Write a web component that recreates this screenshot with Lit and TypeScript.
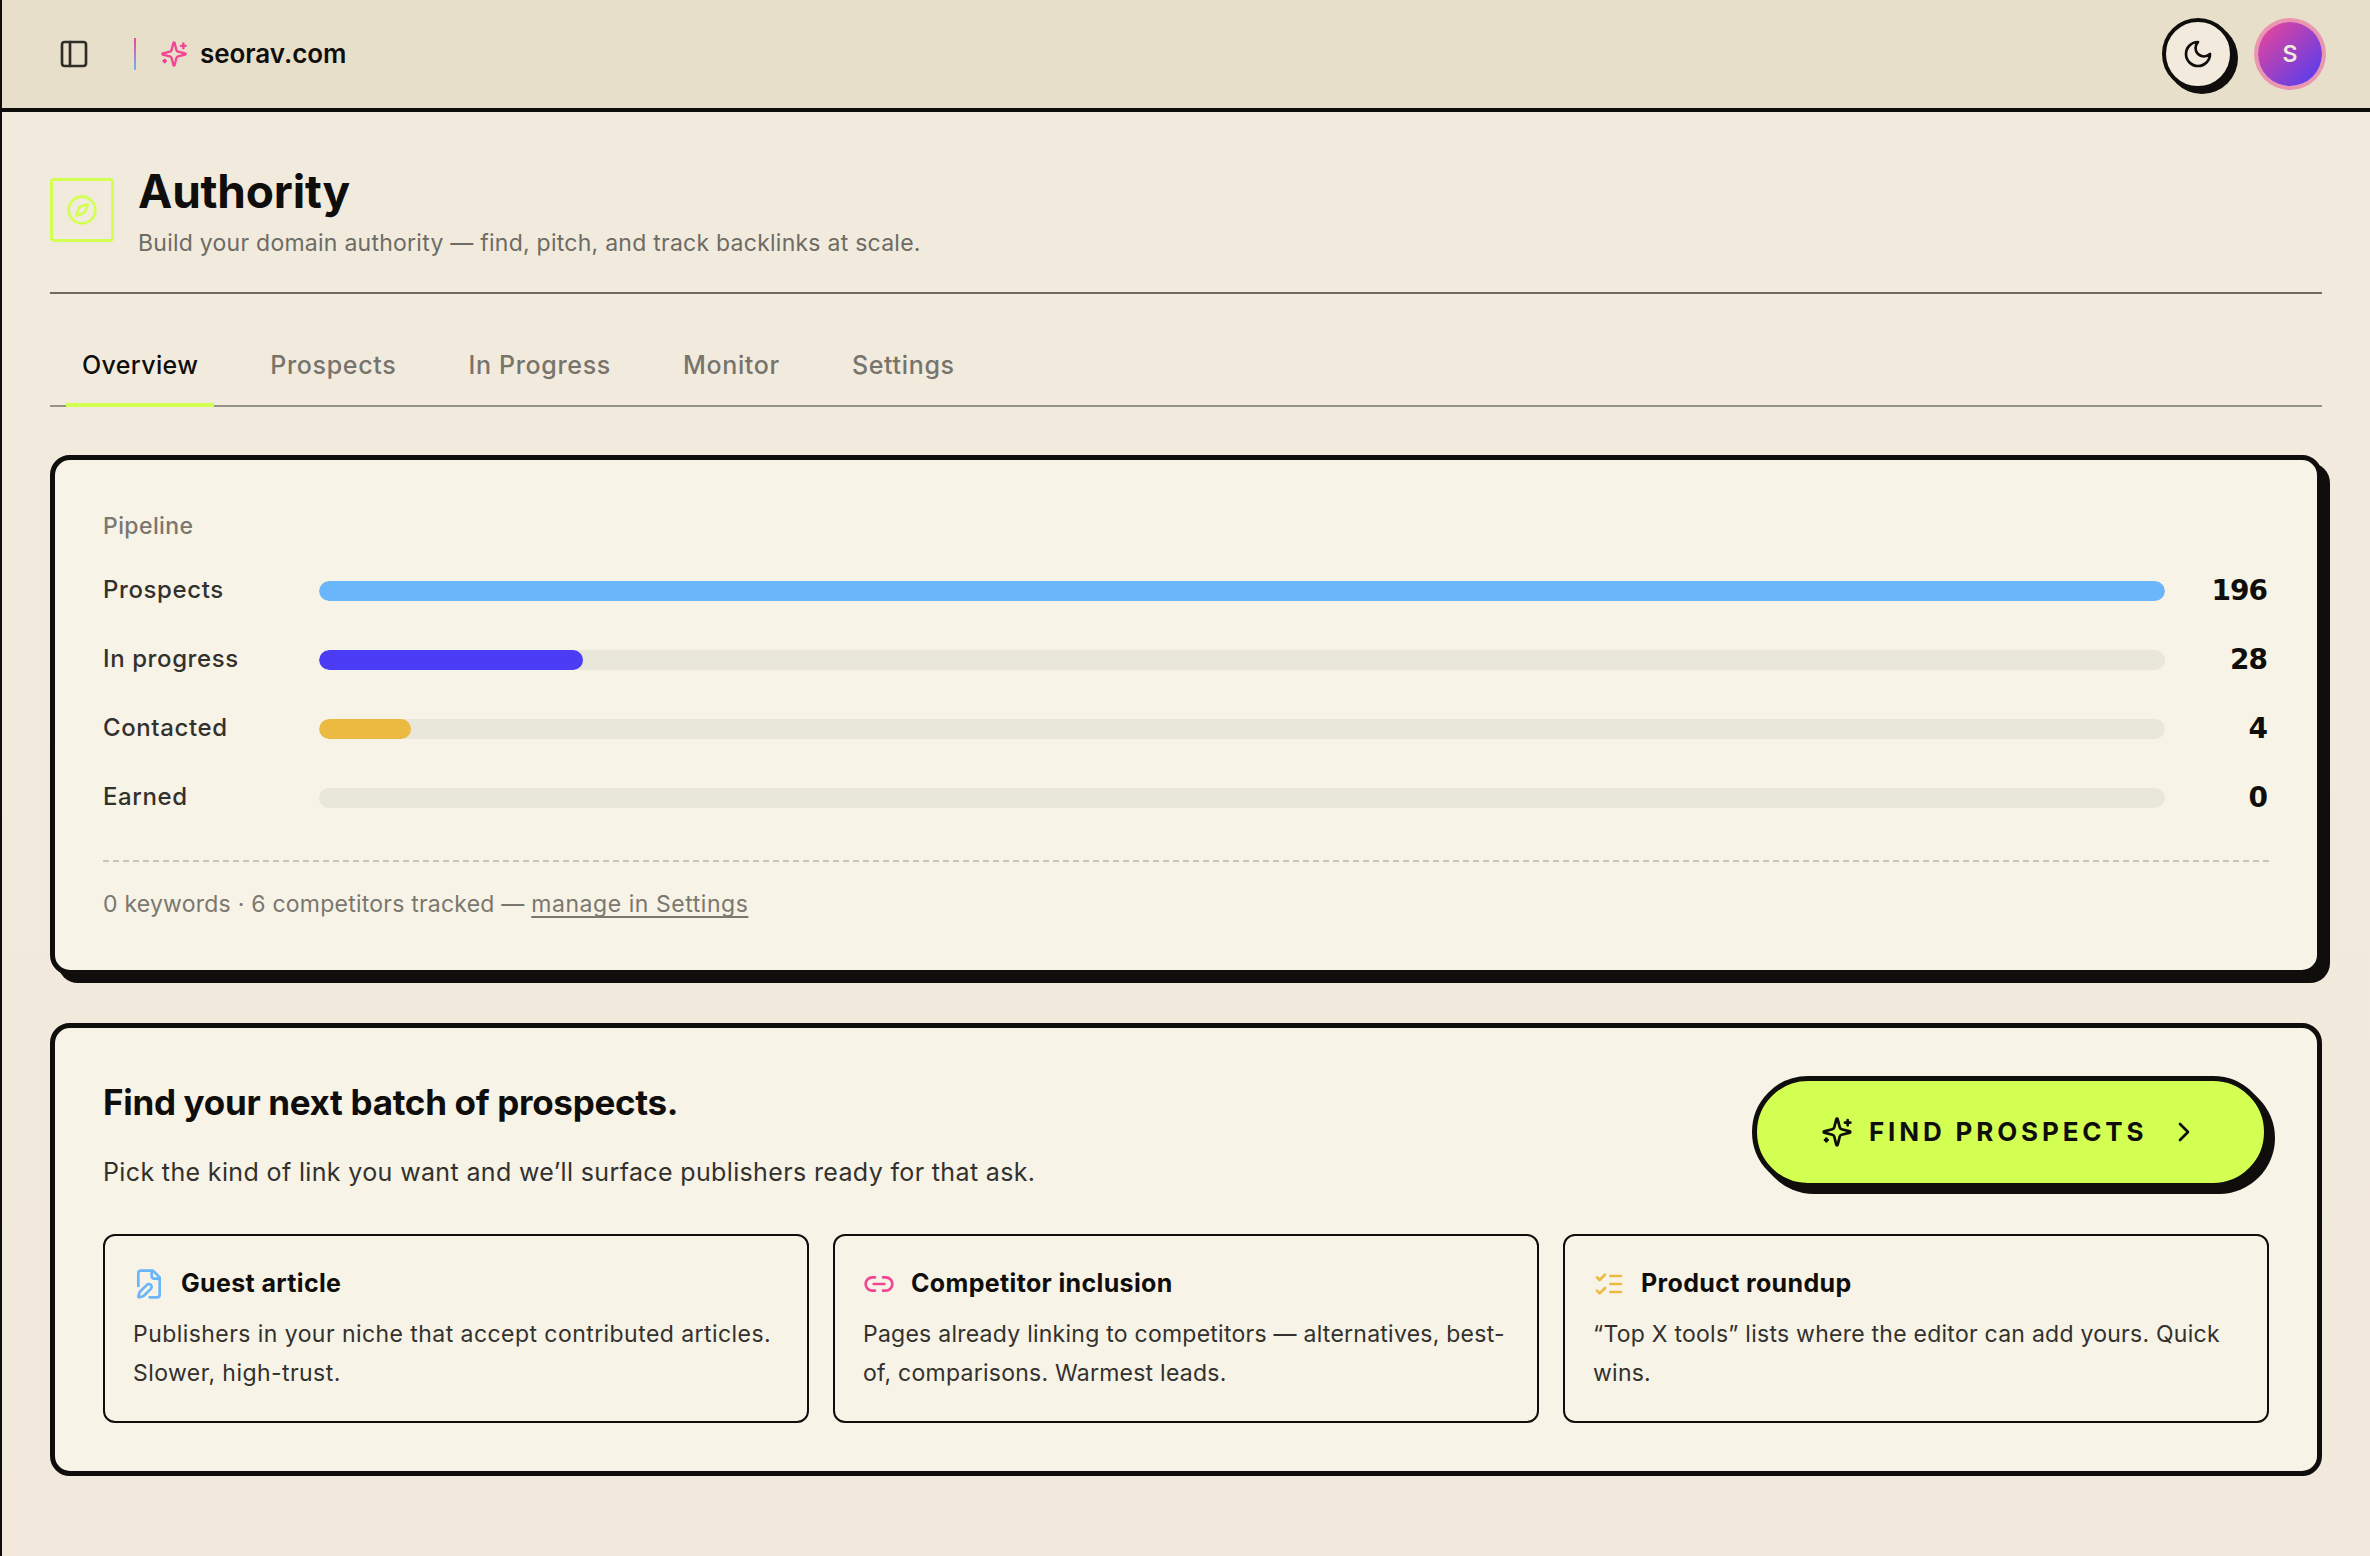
import { LitElement, html, css, svg } from 'lit';
import { customElement, property } from 'lit/decorators.js';
import { classMap } from 'lit/directives/class-map.js';

const ICONS: Record<string, unknown> = {
  panel: svg`<rect width="18" height="18" x="3" y="3" rx="2"/><path d="M9 3v18"/>`,
  sparkles: svg`
    <path d="M9.937 15.5A2 2 0 0 0 8.5 14.063l-6.135-1.582a.5.5 0 0 1 0-.962L8.5 9.936A2 2 0 0 0 9.937 8.5l1.582-6.135a.5.5 0 0 1 .963 0L14.063 8.5A2 2 0 0 0 15.5 9.937l6.135 1.581a.5.5 0 0 1 0 .964L15.5 14.063a2 2 0 0 0-1.437 1.437l-1.582 6.135a.5.5 0 0 1-.963 0z"/>
    <path d="M20 3v4"/><path d="M22 5h-4"/><path d="M4 17v2"/><path d="M5 18H3"/>`,
  moon: svg`<path d="M12 3a6 6 0 0 0 9 9 9 9 0 1 1-9-9Z"/>`,
  compass: svg`
    <path d="m16.24 7.76-1.804 5.411a2 2 0 0 1-1.265 1.265L7.76 16.24l1.804-5.411a2 2 0 0 1 1.265-1.265z"/>
    <circle cx="12" cy="12" r="10"/>`,
  chevron: svg`<path d="m9 18 6-6-6-6"/>`,
  filePen: svg`
    <path d="M12.5 22H18a2 2 0 0 0 2-2V7l-5-5H6a2 2 0 0 0-2 2v9.5"/>
    <path d="M14 2v4a2 2 0 0 0 2 2h4"/>
    <path d="M13.378 15.626a1 1 0 1 0-3.004-3.004l-5.01 5.012a2 2 0 0 0-.506.854l-.837 2.87a.5.5 0 0 0 .62.62l2.87-.837a2 2 0 0 0 .854-.506z"/>`,
  link: svg`
    <path d="M9 17H7A5 5 0 0 1 7 7h2"/><path d="M15 7h2a5 5 0 1 1 0 10h-2"/>
    <path d="M8 12h8"/>`,
  checks: svg`
    <path d="m3 17 2 2 4-4"/><path d="m3 7 2 2 4-4"/>
    <path d="M13 6h8"/><path d="M13 12h8"/><path d="M13 18h8"/>`,
};

/**
 * Stroked 24-unit icon, coloured by the surrounding text.
 *
 * @prop {string} name
 */
@customElement('ui-icon')
class UiIcon extends LitElement {
  @property() name = '';

  static styles = css`
    :host { display: block; width: 32px; height: 32px; flex: none; }
    svg { display: block; width: 100%; height: 100%; }
  `;

  render() {
    return html`
      <svg viewBox="0 0 24 24" fill="none" stroke="currentColor" stroke-width="2"
        stroke-linecap="round" stroke-linejoin="round">${ICONS[this.name]}</svg>
    `;
  }
}

const TABS = ['Overview', 'Prospects', 'In Progress', 'Monitor', 'Settings'];

// percent is the drawn width; non-zero stages never go below 5%
const STAGES = [
  { label: 'Prospects', value: 196, percent: 100, tone: 'sky' },
  { label: 'In progress', value: 28, percent: 14.29, tone: 'indigo' },
  { label: 'Contacted', value: 4, percent: 5, tone: 'amber' },
  { label: 'Earned', value: 0, percent: 0, tone: 'sky' },
];

const KINDS = [
  {
    icon: 'filePen', tone: 'sky', title: 'Guest article',
    text: ['Publishers in your niche that accept contributed articles.', 'Slower, high-trust.'],
  },
  {
    icon: 'link', tone: 'pink', title: 'Competitor inclusion',
    text: ['Pages already linking to competitors — alternatives, best-', 'of, comparisons. Warmest leads.'],
  },
  {
    icon: 'checks', tone: 'amber', title: 'Product roundup',
    text: ['“Top X tools” lists where the editor can add yours. Quick', 'wins.'],
  },
];

@customElement('app-root')
class AppRoot extends LitElement {
  static styles = css`
    :host {
      --ink: #0f0e0c;
      --soft: #33312d;
      --muted: #6d6b64;
      --paper: #f7f3e7;
      --lime: #d2ff52;
      --sky: #6bb5fa;
      --pink: #f24595;
      --amber: #ebba41;
      --indigo: #4a3df5;
      display: block;
      box-sizing: border-box;
      min-height: 100vh;
      border-left: 2px solid var(--ink);
      background: linear-gradient(#f1ebdd, #f1eadd 40%, #f2e9dc);
      color: var(--ink);
      font-family: Inter, "Liberation Sans", sans-serif;
      font-size: 23px;
    }

    *, *::before, *::after { box-sizing: border-box; }
    h1, h2, h3, p { margin: 0; }
    button { font: inherit; color: inherit; cursor: pointer; }

    .sky { color: var(--sky); }
    .pink { color: var(--pink); }
    .amber { color: var(--amber); }
    .indigo { color: var(--indigo); }

    .topbar {
      display: flex;
      align-items: center;
      justify-content: space-between;
      height: 112px;
      padding: 0 48px 0 56px;
      background: #e8dfca;
      border-bottom: 4px solid var(--ink);
    }

    .brand, .actions { display: flex; align-items: center; }
    .brand ui-icon.panel { opacity: 0.85; }
    .actions { gap: 24px; }

    .rule {
      width: 2px;
      height: 32px;
      margin: 0 24px 0 44px;
      background: linear-gradient(var(--pink), var(--sky));
    }

    .brand ui-icon.spark { width: 28px; height: 28px; color: var(--pink); }

    .site {
      margin-left: 12px;
      font-size: 26px;
      line-height: 32px;
      font-weight: 600;
      letter-spacing: -0.05px;
    }

    .theme {
      display: grid;
      place-items: center;
      width: 72px;
      height: 72px;
      padding: 0;
      background: #f1eadd;
      border: 4px solid var(--ink);
      border-radius: 50%;
      box-shadow: 4px 4px 0 var(--ink);
    }

    .avatar {
      display: grid;
      place-items: center;
      width: 64px;
      height: 64px;
      border-radius: 50%;
      background: linear-gradient(135deg, #f24595, #4a3df5);
      box-shadow: 0 0 0 4px #eb96b0;
      color: #f1eadd;
      font-size: 23px;
      font-weight: 600;
    }

    main { padding: 48px; }

    .page-head {
      display: flex;
      align-items: center;
      gap: 24px;
      padding-bottom: 32px;
      border-bottom: 2px solid var(--muted);
    }

    .badge {
      display: grid;
      place-items: center;
      width: 64px;
      height: 64px;
      border: 3px solid var(--lime);
      border-radius: 4px;
      color: var(--lime);
    }

    h1 {
      font-size: 46px;
      line-height: 62px;
      font-weight: 700;
      letter-spacing: -0.2px;
    }

    .page-head p {
      margin-top: 4px;
      line-height: 34px;
      padding-top: 0;
      color: var(--muted);
      letter-spacing: 0.25px;
    }

    .tabs {
      display: flex;
      gap: 40px;
      margin: 32px 0 48px;
      padding: 0 16px;
      border-bottom: 2px solid #969389;
    }

    .tab {
      height: 81px;
      margin-bottom: -2px;
      padding: 0 16px;
      background: none;
      border: 0;
      border-bottom: 4px solid transparent;
      color: #77746c;
      font-size: 25px;
      font-weight: 500;
      letter-spacing: 0.67px;
    }

    .tab.active {
      color: var(--ink);
      border-color: var(--lime);
      letter-spacing: 0.35px;
    }

    .card {
      padding: 48px;
      background: var(--paper);
      border: 5px solid var(--ink);
      border-radius: 20px;
    }

    .pipeline { margin-bottom: 48px; box-shadow: 8px 8px 0 var(--ink); }

    .card-label {
      line-height: 36px;
      color: #7a776f;
      font-weight: 500;
      letter-spacing: 0.4px;
    }

    .stages { display: grid; gap: 23px; margin-top: 24px; }

    .stage {
      display: grid;
      grid-template-columns: 192px 1fr 80px;
      column-gap: 24px;
      align-items: center;
      height: 46px;
      color: var(--soft);
      font-weight: 500;
    }

    .stage-label {
      padding-bottom: 3px;
      font-size: 24px;
      letter-spacing: 0.6px;
    }

    .track {
      height: 20px;
      border-radius: 10px;
      background: #e9e6da;
      overflow: hidden;
    }

    .fill { height: 100%; border-radius: 10px; background: currentColor; }

    .count {
      padding: 0 2px 1px 0;
      text-align: right;
      color: var(--ink);
      font-family: "DejaVu Sans", sans-serif;
      font-size: 28px;
      font-weight: 700;
      letter-spacing: -1px;
    }

    .tracked {
      margin-top: 39px;
      padding-top: 24px;
      border-top: 2px dashed #c9c5ba;
      line-height: 36px;
      color: #7a776f;
      letter-spacing: 0.23px;
    }

    .tracked a {
      letter-spacing: 0.55px;
      text-decoration: underline;
      text-decoration-thickness: 2px;
      text-decoration-skip-ink: none;
      text-underline-offset: 4px;
    }

    .find-head {
      display: flex;
      align-items: flex-start;
      justify-content: space-between;
      margin-bottom: 40px;
    }

    h2 {
      font-size: 35px;
      line-height: 52px;
      font-weight: 700;
      letter-spacing: -0.31px;
    }

    .find-head p {
      margin-top: 23px;
      font-size: 25px;
      line-height: 43px;
      color: var(--soft);
      letter-spacing: 0.36px;
    }

    .find {
      display: flex;
      align-items: center;
      gap: 16px;
      width: 517px;
      height: 112px;
      padding: 0 64px;
      background: var(--lime);
      border: 5px solid var(--ink);
      border-radius: 56px;
      box-shadow: 6px 6px 0 var(--ink);
      font-size: 26px;
      font-weight: 700;
      letter-spacing: 3.85px;
      white-space: nowrap;
    }

    .find span { flex: 1; padding-bottom: 1px; text-align: left; }

    .kinds {
      display: grid;
      grid-template-columns: repeat(3, 1fr);
      gap: 24px;
    }

    .kind {
      height: 189px;
      padding: 28px;
      border: 2px solid var(--ink);
      border-radius: 12px;
    }

    .kind-title {
      display: flex;
      align-items: center;
      gap: 16px;
      height: 39px;
      margin-bottom: 12px;
    }

    h3 {
      padding-bottom: 2px;
      font-size: 25px;
      font-weight: 700;
      letter-spacing: 0.35px;
    }

    .kind p {
      line-height: 39px;
      color: var(--soft);
      letter-spacing: 0.25px;
      white-space: nowrap;
    }

    .kind:first-child p { letter-spacing: 0.44px; }
  `;

  render() {
    return html`
      <header class="topbar">
        <div class="brand">
          <ui-icon class="panel" name="panel"></ui-icon>
          <div class="rule"></div>
          <ui-icon class="spark" name="sparkles"></ui-icon>
          <span class="site">seorav.com</span>
        </div>
        <div class="actions">
          <button class="theme"><ui-icon name="moon"></ui-icon></button>
          <div class="avatar">S</div>
        </div>
      </header>

      <main>
        <div class="page-head">
          <div class="badge"><ui-icon name="compass"></ui-icon></div>
          <div>
            <h1>Authority</h1>
            <p>Build your domain authority — find, pitch, and track backlinks at scale.</p>
          </div>
        </div>

        <nav class="tabs">
          ${TABS.map((tab, i) => html`
            <button class=${classMap({ tab: true, active: i === 0 })}>${tab}</button>
          `)}
        </nav>

        <section class="card pipeline">
          <div class="card-label"><span>Pipeline</span></div>
          <div class="stages">
            ${STAGES.map((s) => html`
              <div class="stage">
                <span class="stage-label">${s.label}</span>
                <div class="track">
                  <div class="fill ${s.tone}" style="width: ${s.percent}%"></div>
                </div>
                <span class="count">${s.value}</span>
              </div>
            `)}
          </div>
          <p class="tracked">
            <span>0 keywords · 6 competitors tracked — </span><a>manage in Settings</a>
          </p>
        </section>

        <section class="card">
          <div class="find-head">
            <div>
              <h2>Find your next batch of prospects.</h2>
              <p>Pick the kind of link you want and we’ll surface publishers ready for that ask.</p>
            </div>
            <button class="find">
              <ui-icon name="sparkles"></ui-icon>
              <span>FIND PROSPECTS</span>
              <ui-icon name="chevron"></ui-icon>
            </button>
          </div>
          <div class="kinds">
            ${KINDS.map((k) => html`
              <article class="kind">
                <div class="kind-title">
                  <ui-icon class=${k.tone} name=${k.icon}></ui-icon>
                  <h3>${k.title}</h3>
                </div>
                <p>${k.text[0]}<br>${k.text[1]}</p>
              </article>
            `)}
          </div>
        </section>
      </main>
    `;
  }
}
